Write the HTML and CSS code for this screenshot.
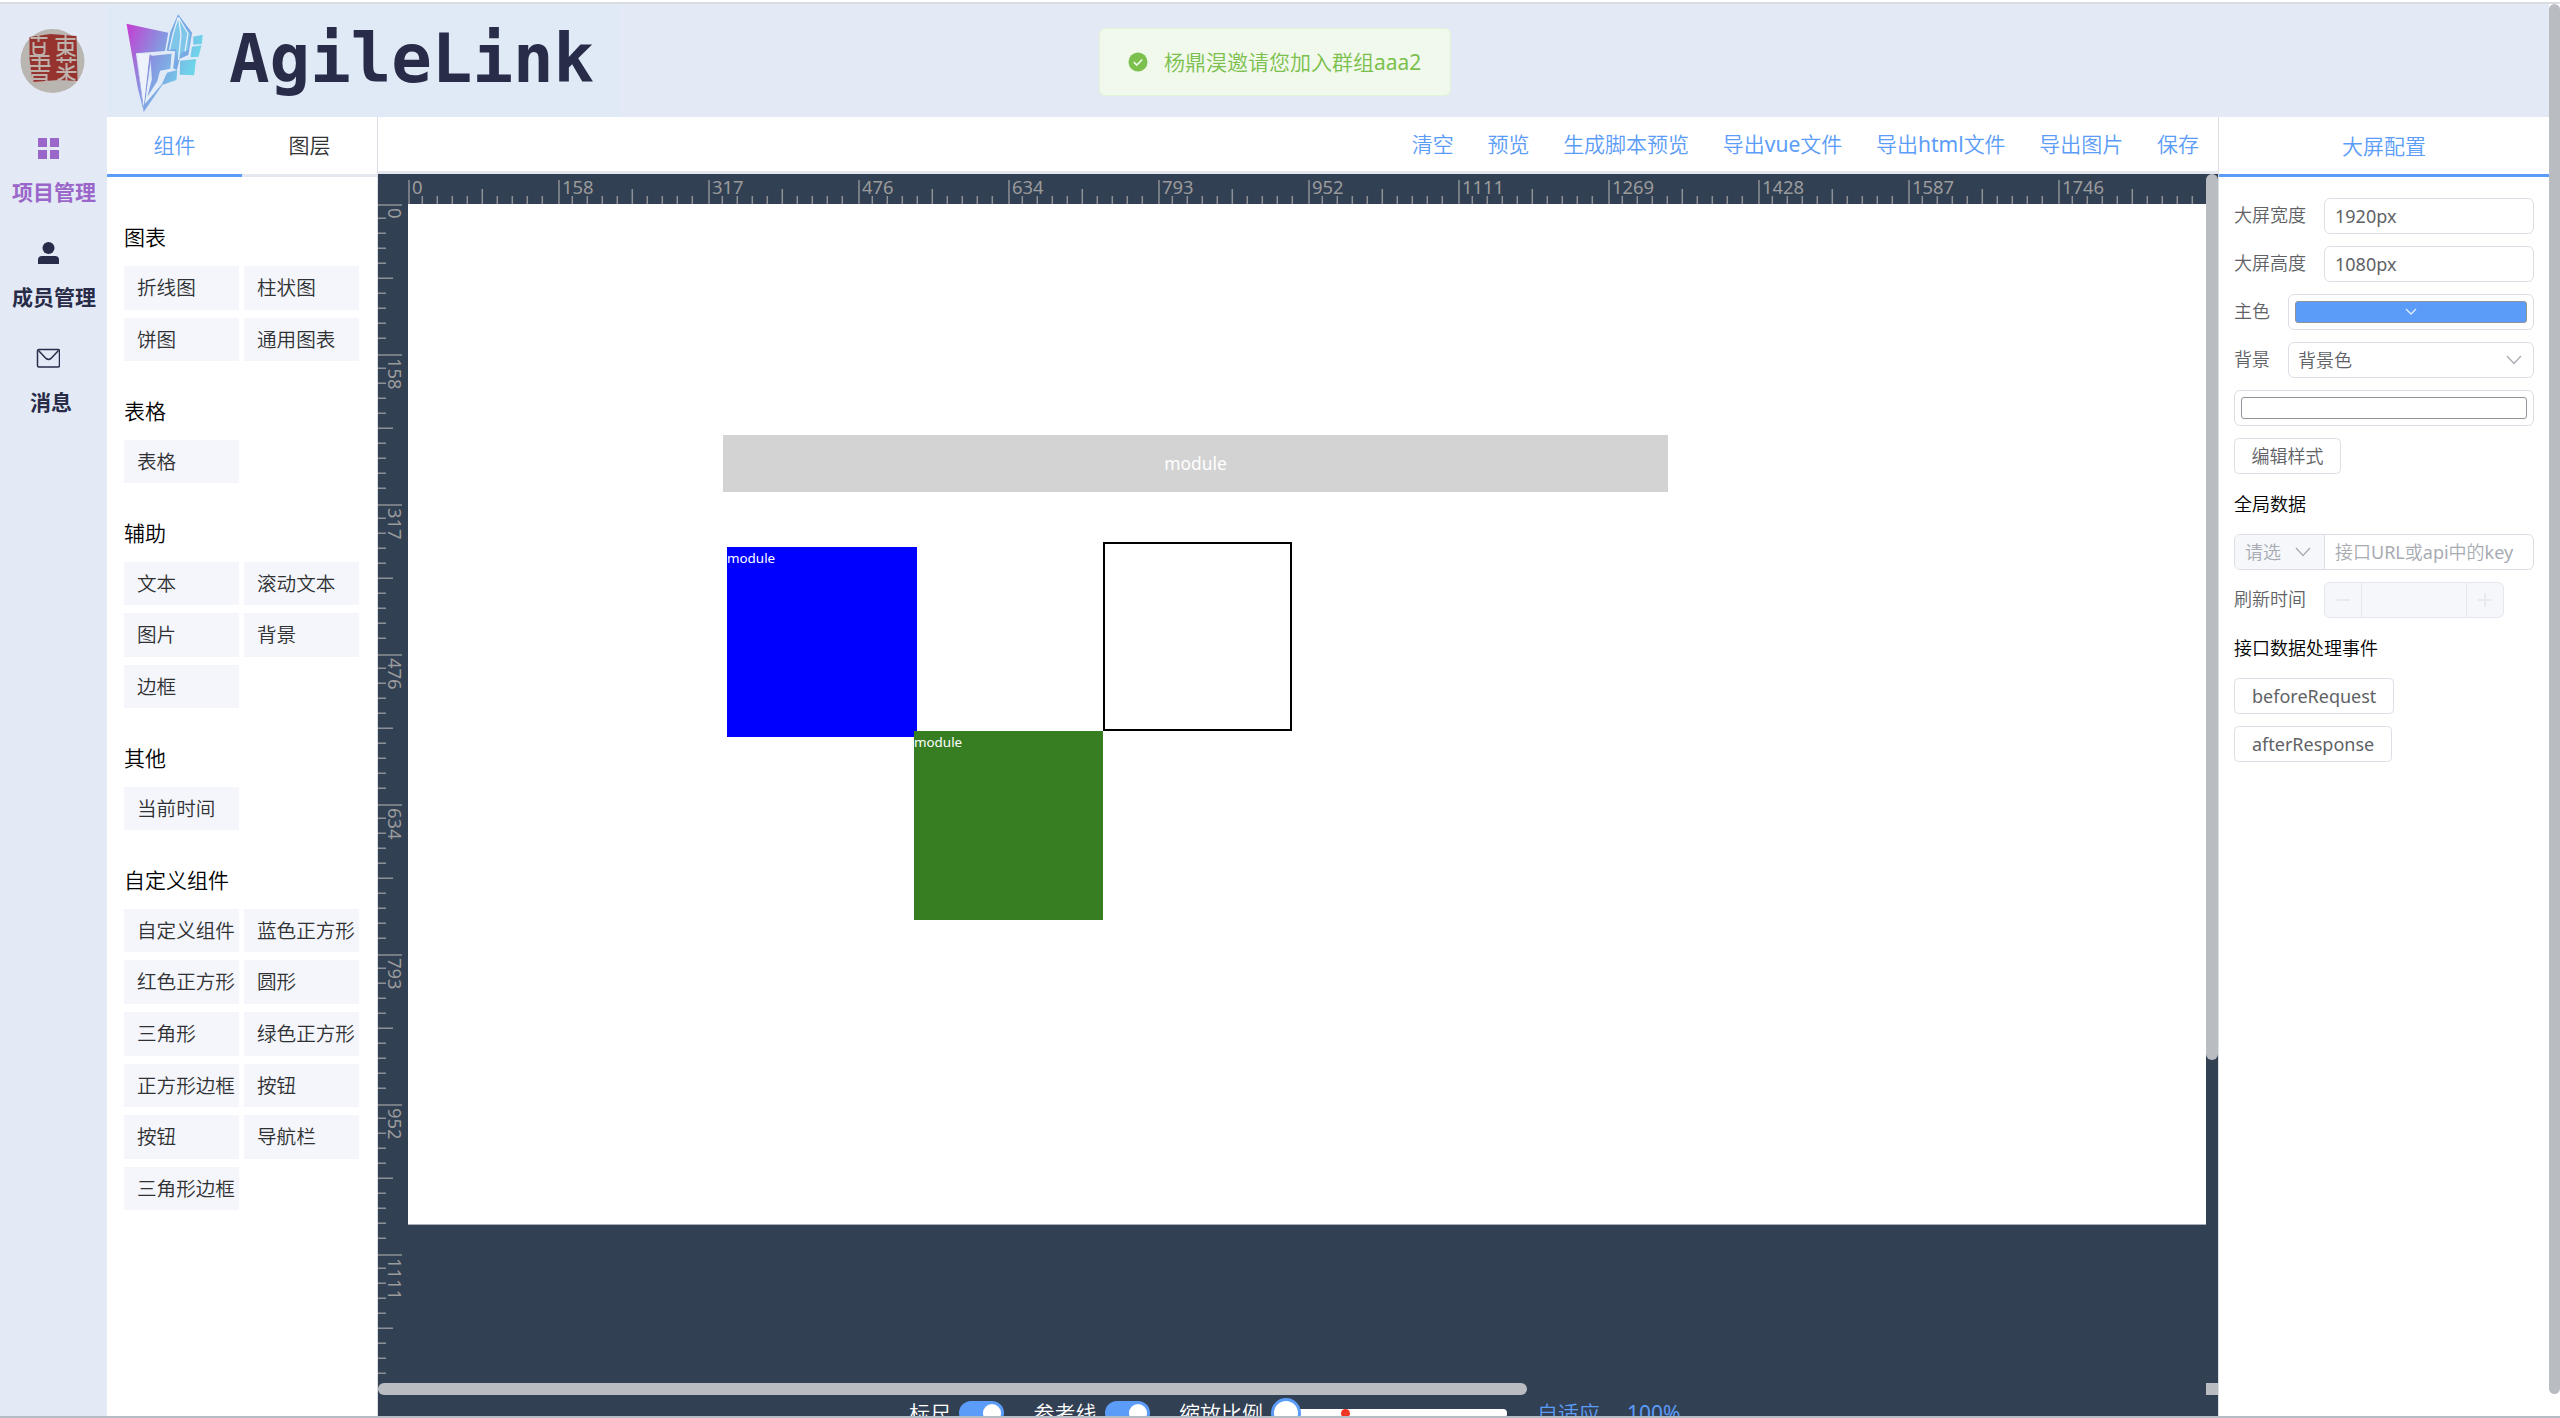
FILE: index.html
```
<!DOCTYPE html>
<html lang="zh-CN">
<head>
<meta charset="utf-8">
<title>AgileLink</title>
<link rel="stylesheet" href="styles.css">
</head>
<body>
<div class="app">
  <div class="window-edge"></div>
  <div class="frame">
    <nav class="side">
      <svg class="avatar" viewBox="0 0 64 64">
        <circle cx="32" cy="32" r="32" fill="#b9b5b1"/>
        <path d="M9 8L30 5L56 7L57 52L38 51L12 53L9 30Z" fill="#96332e"/>
        <g fill="none" stroke="#beb2ac" stroke-width="2">
          <path d="M10 9h17M18 4v9M13 13v10c0 4 11 4 11 0V13M13 18h11M9 27h20M11 31h17v6H11M8 37h22M19 27v15M10 42h19M12 46h14v8H12zM12 50h14"/>
          <path d="M35 10h20M45 4v22M38 14h14v7H38zM45 19c-1 5-5 7-9 8M45 19c1 5 6 7 10 8M36 31h20M41 28v6M50 28v6M38 38l6 3M54 37l-8 4M36 43h20M46 34v18M46 43c-1 5-5 7-9 8M46 43c1 5 5 7 9 8"/>
        </g>
      </svg>
      <a class="nav-item active">
        <svg class="nav-icon" viewBox="0 0 24 24"><path d="M2 2h9v9H2zM14 2h9v9h-9zM2 14h9v9H2zM14 14h9v9h-9z" fill="currentColor"/></svg>
        <span>项目管理</span>
      </a>
      <a class="nav-item">
        <svg class="nav-icon" viewBox="0 0 24 24"><ellipse cx="12.5" cy="7" rx="6" ry="6" fill="currentColor"/><path d="M2 23v-4q0-4 4-4h13q4 0 4 4v4z" fill="currentColor"/></svg>
        <span>成员管理</span>
      </a>
      <a class="nav-item short">
        <svg class="nav-icon" viewBox="0 0 24 24"><rect x="1.5" y="3.5" width="22" height="17.5" rx="1.5" fill="none" stroke="currentColor" stroke-width="1.5"/><path d="M2.5 4.5L10 12.4q2.500 2 5 0L22.500 4.500" fill="none" stroke="currentColor" stroke-width="1.500"/></svg>
        <span>消息</span>
      </a>
    </nav>
    <div class="main">
      <header class="header">
        <svg class="logo" viewBox="300 36 210 306" preserveAspectRatio="none">
          <defs><linearGradient id="g" gradientUnits="userSpaceOnUse" x1="311" y1="80" x2="490" y2="140"><stop offset="0" stop-color="#c43fd2"/><stop offset=".5" stop-color="#8795e0"/><stop offset="1" stop-color="#6fd3ea"/></linearGradient></defs>
          <path d="M311 71L413 98L405 153L334 160L353 336L338 260Z" fill="url(#g)"/>
          <path d="M334 160L353 320L367 164L372 164L364 236L358 300L384 248L398 256L353 336Z" fill="url(#g)"/>
          <path d="M338 162L367 163L353 316Z" fill="#edf2fc"/>
          <path d="M356 312L364 240L374 238L371 262L386 246L396 254Z" fill="#e4edf9"/>
          <path d="M369 168L421 161L418 206L393 212L386 244L362 290L373 238Z" fill="url(#g)"/>
          <path d="M437 43L418 96L409 152L430 154L425 205L434 210L441 176L462 165L471 98Z" fill="#78a9e4"/>
          <path d="M437 56L424 100L417 148L432 148L437 178L446 158L462 149L466 101Z" fill="#7fc6e9"/>
          <path d="M437 52L425 100L416 150M438 52L444 104L438 180M438 52L461 100L454 154" fill="none" stroke="#e7f2fb" stroke-width="3"/>
          <path d="M474 110L497 104L495 132L474 134ZM471 140L494 136L487 170L467 172ZM442 182L481 177L476 226L441 224ZM410 218L435 210L433 240L396 256Z" fill="url(#g)"/>
        </svg>
        <span class="brand">AgileLink</span>
      </header>
      <div class="work">
        <aside class="palette">
          <div class="tabs"><div class="tab on">组件</div><div class="tab">图层</div></div>
          <div class="groups">
            <section><h3>图表</h3><div class="items"><div>折线图</div><div>柱状图</div><div>饼图</div><div>通用图表</div></div></section>
            <section><h3>表格</h3><div class="items"><div>表格</div></div></section>
            <section><h3>辅助</h3><div class="items"><div>文本</div><div>滚动文本</div><div>图片</div><div>背景</div><div>边框</div></div></section>
            <section><h3>其他</h3><div class="items"><div>当前时间</div></div></section>
            <section><h3>自定义组件</h3><div class="items"><div>自定义组件</div><div>蓝色正方形</div><div>红色正方形</div><div>圆形</div><div>三角形</div><div>绿色正方形</div><div>正方形边框</div><div>按钮</div><div>按钮</div><div>导航栏</div><div>三角形边框</div></div></section>
          </div>
        </aside>
        <section class="editor">
          <div class="toolbar"><a>清空</a><a>预览</a><a>生成脚本预览</a><a>导出<span class="en">vue</span>文件</a><a>导出<span class="en">html</span>文件</a><a>导出图片</a><a>保存</a></div>
          <div class="stage">
            <div class="ruler-x">
              <svg class="ticks" width="1798" height="30">
                <defs><pattern id="tx" width="150" height="30" patternUnits="userSpaceOnUse"><path d="M1 6v24M14.300 22v8M29.300 22v8M44.300 22v8M59.300 22v8M74.300 15v15M89.300 22v8M104.300 22v8M119.300 22v8M134.300 22v8" stroke="#8c8f93" stroke-width="1.500"/></pattern></defs>
                <rect width="1798" height="30" fill="url(#tx)"/>
              </svg>
              <div class="nums"><span>0</span><span>158</span><span>317</span><span>476</span><span>634</span><span>793</span><span>952</span><span>1111</span><span>1269</span><span>1428</span><span>1587</span><span>1746</span></div>
            </div>
            <div class="ruler-y">
              <svg class="ticks" width="30" height="1176">
                <defs><pattern id="ty" width="30" height="150" patternUnits="userSpaceOnUse"><path d="M0 1h24M0 14.300h8M0 29.300h8M0 44.300h8M0 59.300h8M0 74.300h15M0 89.300h8M0 104.300h8M0 119.300h8M0 134.300h8" stroke="#8c8f93" stroke-width="1.500"/></pattern></defs>
                <rect width="30" height="1176" fill="url(#ty)"/>
              </svg>
              <div class="nums"><span>0</span><span>158</span><span>317</span><span>476</span><span>634</span><span>793</span><span>952</span><span>1111</span></div>
            </div>
            <div class="canvas">
              <div class="mod bar">module</div>
              <div class="mod blue">module</div>
              <div class="mod outline"></div>
              <div class="mod green">module</div>
            </div>
            <div class="scroll-y"></div>
            <div class="scroll-x"><i></i><b></b></div>
          </div>
          <div class="controls">
            <span>标尺</span><i class="switch"></i>
            <span class="c2">参考线</span><i class="switch"></i>
            <span class="c3">缩放比例</span>
            <div class="slider"><i class="knob"></i><i class="dot"></i></div>
            <a class="fit">自适应</a><a class="pct en">100%</a>
          </div>
        </section>
        <aside class="config">
          <div class="config-tab">大屏配置</div>
          <div class="form">
            <div class="row"><label>大屏宽度</label><div class="input en">1920px</div></div>
            <div class="row"><label>大屏高度</label><div class="input en">1080px</div></div>
            <div class="row"><label>主色</label><div class="picker"><div class="swatch primary"><svg width="12" height="8" viewBox="0 0 12 8"><path d="M1 1l5 5 5-5" fill="none" stroke="#e6efff" stroke-width="1.300"/></svg></div></div></div>
            <div class="row"><label>背景</label><div class="input select">背景色<svg width="16" height="10" viewBox="0 0 16 10"><path d="M1 1l7 7.500 7-7.500" fill="none" stroke="#a8abb2" stroke-width="1.300"/></svg></div></div>
            <div class="row"><div class="picker"><div class="swatch"></div></div></div>
            <div class="row"><div class="btn">编辑样式</div></div>
            <h4>全局数据</h4>
            <div class="row combo"><div class="pre">请选<svg width="16" height="10" viewBox="0 0 16 10"><path d="M1 1l7 7.500 7-7.500" fill="none" stroke="#a8abb2" stroke-width="1.300"/></svg></div><div class="ph">接口<span class="en">URL</span>或<span class="en">api</span>中的<span class="en">key</span></div></div>
            <div class="row"><label>刷新时间</label><div class="number"><i><svg width="14" height="14" viewBox="0 0 14 14"><path d="M0 7h14" stroke="#e4e7ed" stroke-width="1.500"/></svg></i><b></b><i><svg width="14" height="14" viewBox="0 0 14 14"><path d="M0 7h14M7 0v14" stroke="#e4e7ed" stroke-width="1.500"/></svg></i></div></div>
            <h4>接口数据处理事件</h4>
            <div class="row"><div class="btn en">beforeRequest</div></div>
            <div class="row"><div class="btn en">afterResponse</div></div>
          </div>
        </aside>
      </div>
    </div>
    <div class="page-scroll"><i></i></div>
  </div>
  <div class="toast"><svg width="20" height="20" viewBox="0 0 20 20"><circle cx="10" cy="10" r="9.500" fill="#7bc04c"/><path d="M5.800 10.200l3 2.900 5.400-5.600" fill="none" stroke="#f0f9eb" stroke-width="1.600"/></svg><span>杨鼎淏邀请您加入群组<span class="en">aaa2</span></span></div>
</div>
</body>
</html>
```
FILE: styles.css
```
* { box-sizing: border-box; }
body { margin: 0; font-family: "Noto Sans", "Noto Sans CJK SC", sans-serif; font-weight: 350; font-size: 21px; color: #303133; }
i { font-style: normal; }
h3, h4 { margin: 0; font-weight: 350; color: #000; }
.en { font-weight: 400; }
.app { position: relative; display: flex; flex-direction: column; width: 2560px; height: 1418px; overflow: hidden; border-bottom: 2px solid #b4bcc4; background: #fff; }
.window-edge { flex: none; height: 4px; border-bottom: 2px solid #d9dce0; }
.frame { flex: 1; display: flex; min-height: 0; background: #e3eaf6; }

.side { width: 107px; flex: none; display: flex; flex-direction: column; align-items: flex-start; padding-top: 25px; color: #282c49; }
.avatar { width: 65px; height: 64px; margin-left: 20px; margin-bottom: 43px; flex: none; }
.nav-item { display: flex; flex-direction: column; align-items: flex-start; height: 105px; padding-left: 12px; font-weight: 700; line-height: 30px; }
.nav-icon { width: 24px; height: 24px; margin: 0 0 17px 24px; }
.nav-item.active { color: #9b66c9; }
.nav-item.short span { padding-left: 18px; }

.main { flex: 1; display: flex; flex-direction: column; min-width: 0; }
.header { height: 113px; flex: none; display: flex; align-items: flex-start; padding: 8px 0 0 15px; background: linear-gradient(90deg, #e0eaf6 0 513px, #e3eaf6 513px); }
.logo { width: 86px; height: 102px; }
.brand { margin-left: 21px; margin-top: 7px; font: 700 67.4px/80px "DejaVu Sans Mono", monospace; color: #282c49; }
.work { flex: 1; display: flex; min-height: 0; }

.palette { width: 271px; flex: none; background: #fff; border-right: 1px solid #dcdfe6; }
.tabs { display: flex; height: 60px; line-height: 56px; }
.tab { flex: 1; text-align: center; border-bottom: 3px solid #e4e7ed; }
.tab.on { color: #5b9cf8; border-color: #5b9cf8; }
.groups { display: flex; flex-direction: column; gap: 36.4px; padding: 46px 17px 0; }
h3 { font-size: 21px; line-height: 28px; margin-bottom: 15px; }
.groups section + section h3 { margin-top: -1px; }
.items { display: grid; grid-template-columns: 115px 115px; gap: 8px 5px; font-size: 19.6px; }
.items div { height: 43.6px; line-height: 43.6px; padding-left: 13px; background: #f4f6fc; white-space: nowrap; }

.editor { flex: 1; display: flex; flex-direction: column; min-width: 0; background: #324054; overflow: hidden; }
.toolbar { height: 57px; flex: none; display: flex; justify-content: flex-end; gap: 33.700px; padding-right: 19px; line-height: 55px; background: #fff; border-bottom: 3px solid #e4e7ed; color: #5b9cf8; }
.stage { flex: none; height: 1221px; display: grid; grid-template: 30px 1179px 12px / 30px 1798px 12px; color: #9b9b9b; font-size: 18.4px; font-weight: 400; }
.ruler-x { grid-area: 1 / 2; overflow: hidden; }
.ruler-y { grid-area: 2 / 1; overflow: hidden; }
.ticks { display: block; }
.ruler-x, .ruler-y { display: grid; }
.ruler-x > *, .ruler-y > * { grid-area: 1 / 1; }
.ruler-x .nums { display: grid; grid-template-columns: repeat(12, 150px); padding-left: 4px; line-height: 26px; }
.ruler-y .nums { display: grid; grid-template-rows: repeat(8, 150px); padding-top: 4px; justify-content: end; width: 30px; }
.ruler-y .nums span { writing-mode: vertical-rl; line-height: 26px; }
.canvas { grid-area: 2 / 2; position: relative; height: 1021px; background: #fff; border-bottom: 1px solid #a8afb8; color: #fff; font-size: 13.4px; }
.mod { position: absolute; line-height: 22px; }
.bar { left: 315px; top: 230.500px; width: 945px; height: 57px; background: #d3d3d3; text-align: center; font-size: 17.4px; line-height: 57px; }
.blue { left: 319px; top: 343px; width: 190px; height: 190px; background: #00f; }
.outline { left: 695px; top: 338px; width: 189px; height: 189px; border: 2px solid #000; }
.green { left: 506px; top: 527px; width: 189px; height: 189px; background: #377e22; }
.scroll-y { grid-area: 1 / 3 / 3 / 4; height: 886px; border-radius: 6px; background: #b9bdc2; }
.scroll-x { grid-area: 3 / 1 / 4 / 4; display: flex; justify-content: space-between; }
.scroll-x i { width: 1149px; border-radius: 6px; background: #b9bdc2; }
.scroll-x b { width: 12px; background: #b9bdc2; }
.controls { flex: none; height: 36px; display: flex; align-items: center; padding-left: 531px; color: #fff; line-height: 36px; white-space: nowrap; }
.switch { width: 45px; height: 24px; border-radius: 12px; margin-left: 8px; background: #5b9cf8; display: flex; align-items: center; justify-content: flex-end; padding-right: 3px; }
.switch::after { content: ""; width: 18px; height: 18px; border-radius: 50%; background: #fff; }
.c2, .c3 { margin-left: 29.5px; }
.slider { position: relative; width: 221px; height: 9px; margin-left: 23px; border-radius: 4px; background: #fff; }
.knob { position: absolute; left: -15px; top: -11px; width: 30px; height: 30px; border: 3px solid #5b9cf8; border-radius: 50%; background: #fff; }
.dot { position: absolute; left: 55px; top: 0; width: 9px; height: 9px; border-radius: 50%; background: #f03524; }
.fit, .pct { color: #5b9cf8; }
.fit { margin-left: 30px; }
.pct { margin-left: 27px; }

.config { width: 331px; flex: none; background: #fff; border-left: 1px solid #dcdfe6; }
.config-tab { height: 60px; line-height: 58px; text-align: center; border-bottom: 3px solid #5b9cf8; color: #5b9cf8; }
.form { padding: 21px 15px; display: flex; flex-direction: column; gap: 12px; font-size: 18px; color: #606266; }
.row { display: flex; height: 36px; line-height: 34px; }
label { margin-right: 18px; }
.input, .picker, .btn { border: 1.500px solid #dcdfe6; border-radius: 6px; }
.input { flex: 1; padding: 0 10px; }
.select { display: flex; justify-content: space-between; align-items: center; padding: 0 11px 0 9px; }
.picker { flex: 1; padding: 6px; display: flex; }
.swatch { flex: 1; border: 1px solid #909399; border-radius: 3px; display: flex; align-items: center; justify-content: center; }
.primary { background: #5b9cf8; }
.btn { padding: 0 16.500px; border-radius: 4.500px; }
.btn.en { padding: 0 17px; }
h4 { font-size: 18px; height: 36px; line-height: 36px; }
.combo { border: 1.500px solid #dcdfe6; border-radius: 6px; color: #a8abb2; overflow: hidden; }
.pre { width: 90px; padding: 0 13px 0 10px; display: flex; align-items: center; justify-content: space-between; background: #f5f7fa; border-right: 1px solid #dcdfe6; }
.ph { padding-left: 10px; }
.number { width: 180px; display: flex; border: 1.500px solid #e4e7ed; border-radius: 6px; background: #f5f7fa; }
.number i { width: 36px; display: flex; align-items: center; justify-content: center; }
.number b { flex: 1; border: solid #e4e7ed; border-width: 0 1px; }

.page-scroll { width: 11px; flex: none; background: #fff; }
.page-scroll i { display: block; height: 1390px; background: #b9bdc2; border-radius: 6px; }

.toast { position: absolute; left: 1099px; top: 28px; width: 352px; height: 68px; display: flex; align-items: center; padding-left: 28px; gap: 16px; border: 1px solid #e1f3d8; border-radius: 6px; background: #f0f9eb; color: #7bc04c; white-space: nowrap; }
.toast > span { margin-top: -2px; }
```
